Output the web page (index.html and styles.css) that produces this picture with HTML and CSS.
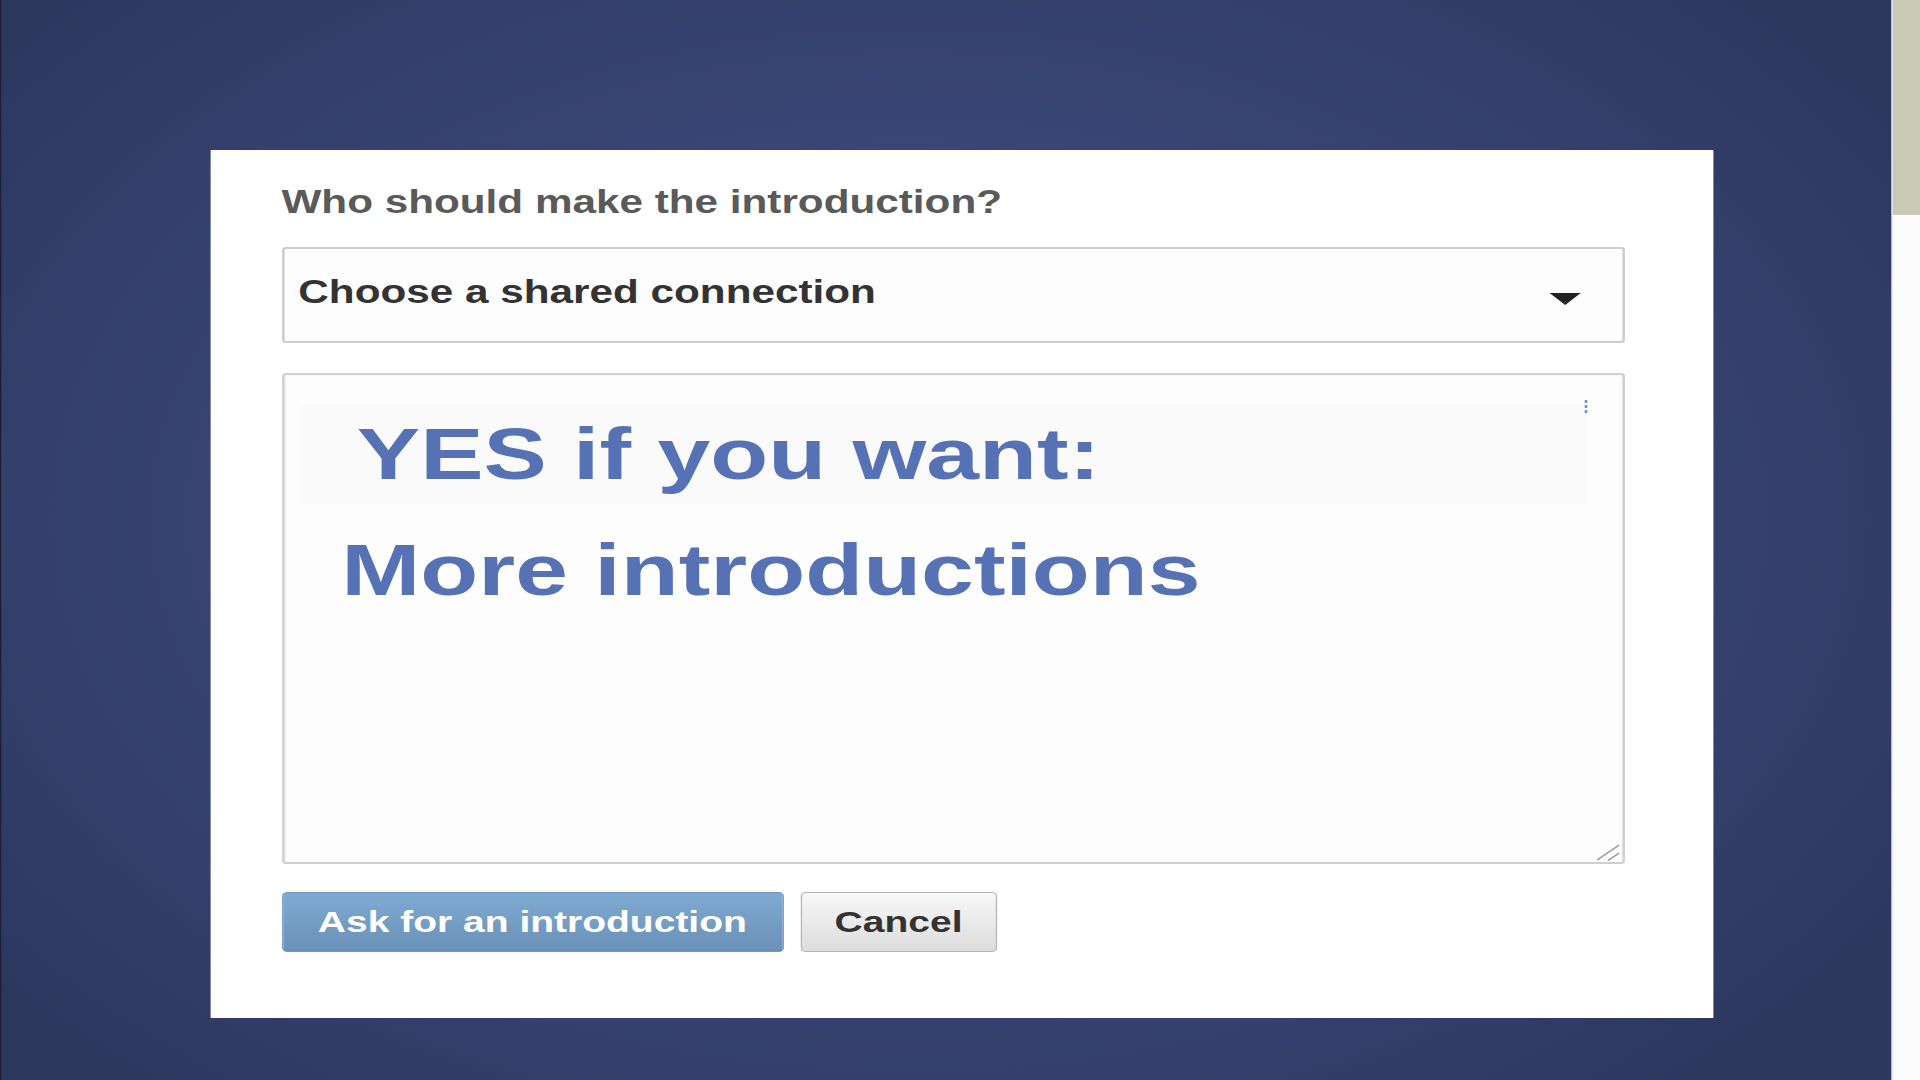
FILE: index.html
```html
<!DOCTYPE html>
<html lang="en">
<head>
<meta charset="utf-8">
<title>Ask for an introduction</title>
<link rel="stylesheet" href="styles.css">
</head>
<body>
<div class="stage">
  <main class="canvas">
    <section class="card">
      <h2 class="label">Who should make the introduction?</h2>
      <div class="select">
        <span class="select-text">Choose a shared connection</span>
        <span class="caret"></span>
      </div>
      <div class="textarea">
        <div class="band">
          <span class="line1">YES if you want:</span>
          <span class="mark"></span>
        </div>
        <div class="line2">More introductions</div>
        <svg class="grip" viewBox="0 0 18 17" width="18" height="17">
          <line x1="0.5" y1="16" x2="17.5" y2="1" />
          <line x1="9" y1="16.5" x2="17.5" y2="9" />
        </svg>
      </div>
      <div class="actions">
        <button class="btn primary">Ask for an introduction</button>
        <button class="btn secondary">Cancel</button>
      </div>
    </section>
  </main>
  <aside class="scrollbar"><div class="thumb"></div></aside>
</div>
</body>
</html>
```
FILE: styles.css
```css
html, body {
  margin: 0;
  padding: 0;
  width: 1920px;
  height: 1080px;
  overflow: hidden;
  background: #2e385f;
}

.stage {
  width: 1477px;
  height: 1080px;
  display: flex;
  transform: scaleX(1.3);
  transform-origin: 0 0;
  font-family: "Liberation Sans", Arial, sans-serif;
  font-weight: bold;
}

.canvas {
  flex: 1;
  box-sizing: border-box;
  height: 1080px;
  padding: 150px 0 0 160.5px;
  border-left: 1.5px solid #1b2036;
  background: radial-gradient(ellipse 62% 70% at 48% 48%, #414e82 0%, #3c487a 40%, #343f6b 75%, #2d375e 100%);
}

.card {
  box-sizing: border-box;
  width: 1156px;
  height: 868px;
  background: #ffffff;
  padding: 34px 0 0 55px;
}

.label {
  margin: 0;
  font-size: 32.5px;
  line-height: 36px;
  font-weight: bold;
  color: #5a5a5a;
}

.select {
  box-sizing: border-box;
  margin-top: 27px;
  width: 1033px;
  height: 96px;
  border: 2px solid #cdcdcd;
  border-radius: 3px;
  background: #fdfdfd;
  padding: 25px 32px 0 11px;
  display: flex;
  justify-content: space-between;
  align-items: flex-start;
}

.select-text {
  font-size: 32.5px;
  line-height: 36px;
  color: #333333;
}

.caret {
  margin-top: 19px;
  width: 0;
  height: 0;
  border-left: 12px solid transparent;
  border-right: 12px solid transparent;
  border-top: 12px solid #222222;
}

.textarea {
  position: relative;
  box-sizing: border-box;
  margin-top: 30px;
  width: 1033px;
  height: 491px;
  border: 2px solid #d0d0d0;
  border-radius: 3px;
  background: #fdfdfd;
  box-shadow: inset 1px 1px 2px rgba(0,0,0,0.05);
  padding: 29px 0 0 0;
  color: #5671b4;
}

.band {
  position: relative;
  margin-left: 12px;
  width: 990px;
  height: 100px;
  background: #fafafa;
  padding-left: 44px;
  box-sizing: border-box;
}

.line1 {
  font-size: 73px;
  line-height: 100px;
  white-space: nowrap;
}

.mark {
  position: absolute;
  right: 0;
  top: -4px;
  width: 1.5px;
  height: 13px;
  background: repeating-linear-gradient(#7d8fc6 0 3px, transparent 3px 5px);
}

.line2 {
  margin-top: 16px;
  padding-left: 44px;
  font-size: 73px;
  line-height: 100px;
  white-space: nowrap;
}

.grip {
  position: absolute;
  right: 2px;
  bottom: 1px;
  stroke: #9c9c9c;
  stroke-width: 1.4;
  fill: none;
}

.actions {
  margin-top: 28px;
  display: flex;
  gap: 13.5px;
}

.btn {
  box-sizing: border-box;
  height: 60px;
  margin: 0;
  padding: 0 27px;
  font-family: "Liberation Sans", Arial, sans-serif;
  font-weight: bold;
  font-size: 30px;
  line-height: 58px;
  border-radius: 4px;
  cursor: pointer;
}

.primary {
  color: #ffffff;
  border: 1px solid #7096bd;
  background: linear-gradient(#7fabd3, #6a90b6);
}

.secondary {
  padding: 0 26px 0 25px;
  color: #333333;
  border: 1px solid #b3b3b3;
  background: linear-gradient(#f8f8f8, #dcdcdc);
}

.scrollbar {
  width: 21.8px;
  height: 1080px;
  box-sizing: border-box;
  border-left: 1px solid #dde1ec;
  background: #fcfcfc;
}

.thumb {
  height: 215px;
  background: #c9cab4;
}
```
